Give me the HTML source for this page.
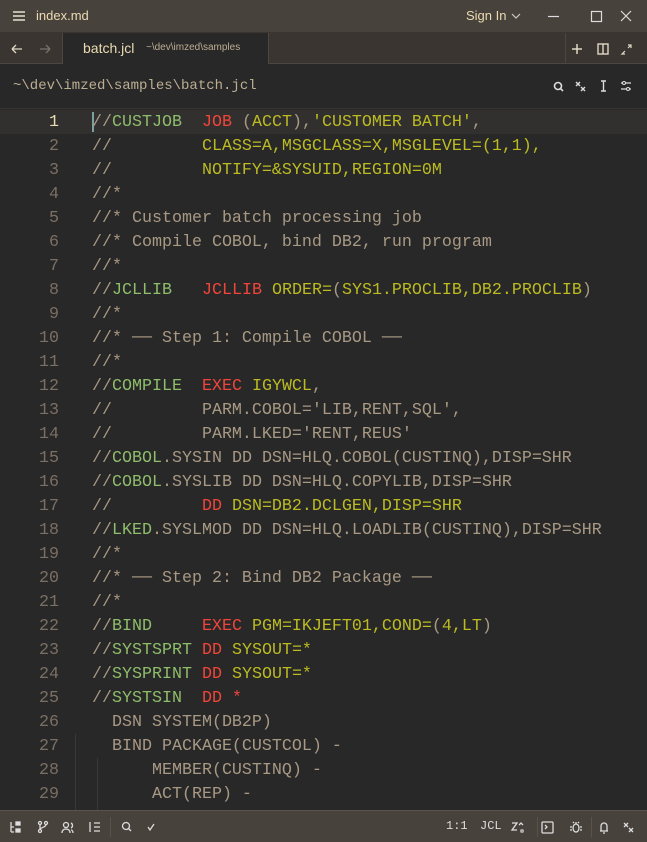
<!DOCTYPE html>
<html><head><meta charset="utf-8"><style>
*{margin:0;padding:0;box-sizing:border-box}
body{width:647px;height:842px;background:#282828;font-family:"Liberation Sans",sans-serif;overflow:hidden;position:relative;color:#d5c4a1}
.title{position:absolute;left:0;top:0;width:647px;height:33px;background:#48423c;border-bottom:1px solid #3a3530}
.tabs{position:absolute;left:0;top:33px;width:647px;height:31px;background:#3a3531;border-bottom:1px solid #4d4741}
.tab{position:absolute;left:62px;top:0;width:207px;height:32px;background:#282828;border-left:1px solid #4d4741;border-right:1px solid #4d4741}
.crumb{position:absolute;left:0;top:64px;width:647px;height:45px;background:#282828;border-bottom:1px solid #3a3530}
.mono{font-family:"Liberation Mono",monospace}
.ed{position:absolute;left:0;top:110px;width:647px;height:700px;overflow:hidden}
.ln{position:absolute;left:0;width:647px;height:24px;line-height:26px;font-family:"Liberation Mono",monospace;font-size:16.67px;white-space:pre}
.n{position:absolute;left:0;width:59px;text-align:right;color:#7c6f64}
.code{position:absolute;left:92px;color:#a89984}
.g{color:#8ebd6b}.r{color:#f0453a}.y{color:#bcbb22}.t{color:#a89984}
.status{position:absolute;left:0;top:810px;width:647px;height:32px;background:#48423c;border-top:1px solid #5a534c;color:#ddd}
svg{position:absolute}
</style></head><body>
<div class="title">
 <svg style="left:13px;top:11px" width="12" height="10"><path d="M0 1h12M0 5h12M0 9h12" stroke="#e8e0d0" stroke-width="1.4"/></svg>
 <div style="position:absolute;left:36px;top:8px;font-size:13px;color:#ebdbb2">index.md</div>
 <div style="position:absolute;left:466px;top:8px;font-size:13px;color:#ebdbb2">Sign In</div>
 <svg style="left:418px;top:0" width="229" height="33"><path d="M94 14l4 4 4-4" stroke="#ccc" fill="none" stroke-width="1.2"/><path d="M130 16.5h11" stroke="#ddd" stroke-width="1.2"/><rect x="173.5" y="11.5" width="10" height="10" stroke="#ddd" fill="none" stroke-width="1.2"/><path d="M203 11l10 10M213 11l-10 10" stroke="#ddd" stroke-width="1.2"/></svg>
</div>
<div class="tabs">
 <svg style="left:10px;top:8px" width="44" height="16"><path d="M2 8h10M2 8l4-4M2 8l4 4" stroke="#e0d6c4" fill="none" stroke-width="1.3"/><path d="M30 8h10M40 8l-4-4M40 8l-4 4" stroke="#7a7068" fill="none" stroke-width="1.3"/></svg>
 <div class="tab"><span style="position:absolute;left:20px;top:7px;font-size:14px;color:#ebdbb2">batch.jcl</span><span style="position:absolute;left:83px;top:9px;font-size:10px;color:#bdae93">~\dev\imzed\samples</span></div>
 <div style="position:absolute;left:565px;top:0;width:1px;height:31px;background:#4d4741"></div>
 <svg style="left:568px;top:8px" width="75" height="16"><path d="M9 3v10M4 8h10" stroke="#e0d6c4" stroke-width="1.5"/><rect x="30" y="3" width="10" height="10" stroke="#e0d6c4" fill="none" stroke-width="1.4"/><path d="M35 3v10" stroke="#e0d6c4" stroke-width="1.4"/><path d="M56 11l-2 2h3M54 13l3-3M60 4h3v3M63 4l-3 3" stroke="#e0d6c4" fill="none" stroke-width="1.2"/></svg>
</div>
<div class="crumb">
 <div class="mono" style="position:absolute;left:13px;top:14px;font-size:14px;color:#bdae93">~\dev\imzed\samples\batch.jcl</div>
 <svg style="left:550px;top:14px" width="90" height="16"><circle cx="8" cy="8" r="3.5" stroke="#ddd" fill="none" stroke-width="1.6"/><path d="M10.5 10.5l2.5 2.5" stroke="#ddd" stroke-width="1.6"/><path d="M26 4l4 4M30 4l-4 4M31 9l4 4M35 9l-4 4" stroke="#ddd" stroke-width="1.4"/><path d="M51 3h5M53.5 3v10M51 13h5" stroke="#ddd" stroke-width="1.4"/><path d="M71 5h10M71 11h10" stroke="#ddd" stroke-width="1.3"/><circle cx="74" cy="5" r="1.5" fill="#282828" stroke="#ddd"/><circle cx="78" cy="11" r="1.5" fill="#282828" stroke="#ddd"/></svg>
</div>
<div class="ed">
<div style="position:absolute;left:0;top:0;width:647px;height:24px;background:#32302f"></div>
<div style="position:absolute;left:92px;top:2px;width:2px;height:20px;background:#7fa0a0"></div>
<div style="position:absolute;left:75px;top:624px;width:1px;height:76px;background:#3c3836"></div>
<div style="position:absolute;left:97px;top:648px;width:1px;height:52px;background:#3c3836"></div>
<div class="ln" style="top:0"><span class="n" style="color:#ebdbb2">1</span><span class="code">//<span class="g">CUSTJOB</span>  <span class="r">JOB</span> (<span class="y">ACCT</span>),<span class="y">'CUSTOMER BATCH'</span>,</span></div>
<div class="ln" style="top:24px"><span class="n">2</span><span class="code">//         <span class="y">CLASS=A,MSGCLASS=X,MSGLEVEL=(1,1),</span></span></div>
<div class="ln" style="top:48px"><span class="n">3</span><span class="code">//         <span class="y">NOTIFY=&amp;SYSUID,REGION=0M</span></span></div>
<div class="ln" style="top:72px"><span class="n">4</span><span class="code">//*</span></div>
<div class="ln" style="top:96px"><span class="n">5</span><span class="code">//* Customer batch processing job</span></div>
<div class="ln" style="top:120px"><span class="n">6</span><span class="code">//* Compile COBOL, bind DB2, run program</span></div>
<div class="ln" style="top:144px"><span class="n">7</span><span class="code">//*</span></div>
<div class="ln" style="top:168px"><span class="n">8</span><span class="code">//<span class="g">JCLLIB</span>   <span class="r">JCLLIB</span> <span class="y">ORDER=</span>(<span class="y">SYS1.PROCLIB,DB2.PROCLIB</span>)</span></div>
<div class="ln" style="top:192px"><span class="n">9</span><span class="code">//*</span></div>
<div class="ln" style="top:216px"><span class="n">10</span><span class="code">//* ── Step 1: Compile COBOL ──</span></div>
<div class="ln" style="top:240px"><span class="n">11</span><span class="code">//*</span></div>
<div class="ln" style="top:264px"><span class="n">12</span><span class="code">//<span class="g">COMPILE</span>  <span class="r">EXEC</span> <span class="y">IGYWCL</span>,</span></div>
<div class="ln" style="top:288px"><span class="n">13</span><span class="code">//         PARM.COBOL='LIB,RENT,SQL',</span></div>
<div class="ln" style="top:312px"><span class="n">14</span><span class="code">//         PARM.LKED='RENT,REUS'</span></div>
<div class="ln" style="top:336px"><span class="n">15</span><span class="code">//<span class="g">COBOL</span>.SYSIN DD DSN=HLQ.COBOL(CUSTINQ),DISP=SHR</span></div>
<div class="ln" style="top:360px"><span class="n">16</span><span class="code">//<span class="g">COBOL</span>.SYSLIB DD DSN=HLQ.COPYLIB,DISP=SHR</span></div>
<div class="ln" style="top:384px"><span class="n">17</span><span class="code">//         <span class="r">DD</span> <span class="y">DSN=DB2.DCLGEN,DISP=SHR</span></span></div>
<div class="ln" style="top:408px"><span class="n">18</span><span class="code">//<span class="g">LKED</span>.SYSLMOD DD DSN=HLQ.LOADLIB(CUSTINQ),DISP=SHR</span></div>
<div class="ln" style="top:432px"><span class="n">19</span><span class="code">//*</span></div>
<div class="ln" style="top:456px"><span class="n">20</span><span class="code">//* ── Step 2: Bind DB2 Package ──</span></div>
<div class="ln" style="top:480px"><span class="n">21</span><span class="code">//*</span></div>
<div class="ln" style="top:504px"><span class="n">22</span><span class="code">//<span class="g">BIND</span>     <span class="r">EXEC</span> <span class="y">PGM=IKJEFT01,COND=</span>(<span class="y">4,LT</span>)</span></div>
<div class="ln" style="top:528px"><span class="n">23</span><span class="code">//<span class="g">SYSTSPRT</span> <span class="r">DD</span> <span class="y">SYSOUT=*</span></span></div>
<div class="ln" style="top:552px"><span class="n">24</span><span class="code">//<span class="g">SYSPRINT</span> <span class="r">DD</span> <span class="y">SYSOUT=*</span></span></div>
<div class="ln" style="top:576px"><span class="n">25</span><span class="code">//<span class="g">SYSTSIN</span>  <span class="r">DD *</span></span></div>
<div class="ln" style="top:600px"><span class="n">26</span><span class="code">  DSN SYSTEM(DB2P)</span></div>
<div class="ln" style="top:624px"><span class="n">27</span><span class="code">  BIND PACKAGE(CUSTCOL) -</span></div>
<div class="ln" style="top:648px"><span class="n">28</span><span class="code">      MEMBER(CUSTINQ) -</span></div>
<div class="ln" style="top:672px"><span class="n">29</span><span class="code">      ACT(REP) -</span></div>
</div>
<div class="status">
 <svg style="left:8px;top:8px" width="160" height="16" fill="none" stroke="#ddd" stroke-width="1.3"><path d="M3 3v10M3 8h3M3 13h3"/><rect x="8" y="3" width="4" height="3" fill="#ddd"/><rect x="8" y="10" width="4" height="3" fill="#ddd"/><circle cx="32" cy="4" r="1.5"/><circle cx="32" cy="12" r="1.5"/><circle cx="38" cy="4" r="1.5"/><path d="M32 5.5v5M38 5.5c0 3-6 3-6 5"/><circle cx="58" cy="6" r="2.5"/><path d="M54 14c0-3 2-4 4-4s4 1 4 4M63 4c2 1 2 4 0 5M65 14c0-2-1-3-2-3"/><path d="M82 3v10M86 4h6M86 8h6M86 12h6"/><circle cx="118" cy="7" r="3.5"/><path d="M120.5 9.5l2.5 2.5"/><path d="M140 8l2 3 4-6"/></svg>
 <div class="mono" style="position:absolute;left:446px;top:8px;font-size:12px;color:#ddd">1:1</div>
 <div class="mono" style="position:absolute;left:480px;top:8px;font-size:12px;color:#ddd">JCL</div>
 <svg style="left:510px;top:8px" width="135" height="16" fill="none" stroke="#ddd" stroke-width="1.3"><path d="M2 4h5l-5 7h5M9 6l2-2 2 2"/><circle cx="12" cy="12" r="2" fill="#aaa" stroke="none"/><rect x="32" y="3" width="11" height="11" rx="1"/><path d="M35 6l2 2-2 2"/><ellipse cx="66" cy="9" rx="3" ry="4"/><path d="M66 5V3M62 8h-2M70 8h2M62 11h-2M70 11h2M64 4l-1-1M68 4l1-1"/><path d="M91 12V7a3 3 0 0 1 6 0v5zM90 12h8M93 14h2"/><path d="M114 4l4 4M118 4l-4 4M119 9l4 4M123 9l-4 4"/></svg>
 <div style="position:absolute;left:110px;top:6px;width:1px;height:20px;background:#5a534c"></div>
 <div style="position:absolute;left:537px;top:6px;width:1px;height:20px;background:#5a534c"></div>
 <div style="position:absolute;left:591px;top:6px;width:1px;height:20px;background:#5a534c"></div>
</div>
</body></html>
